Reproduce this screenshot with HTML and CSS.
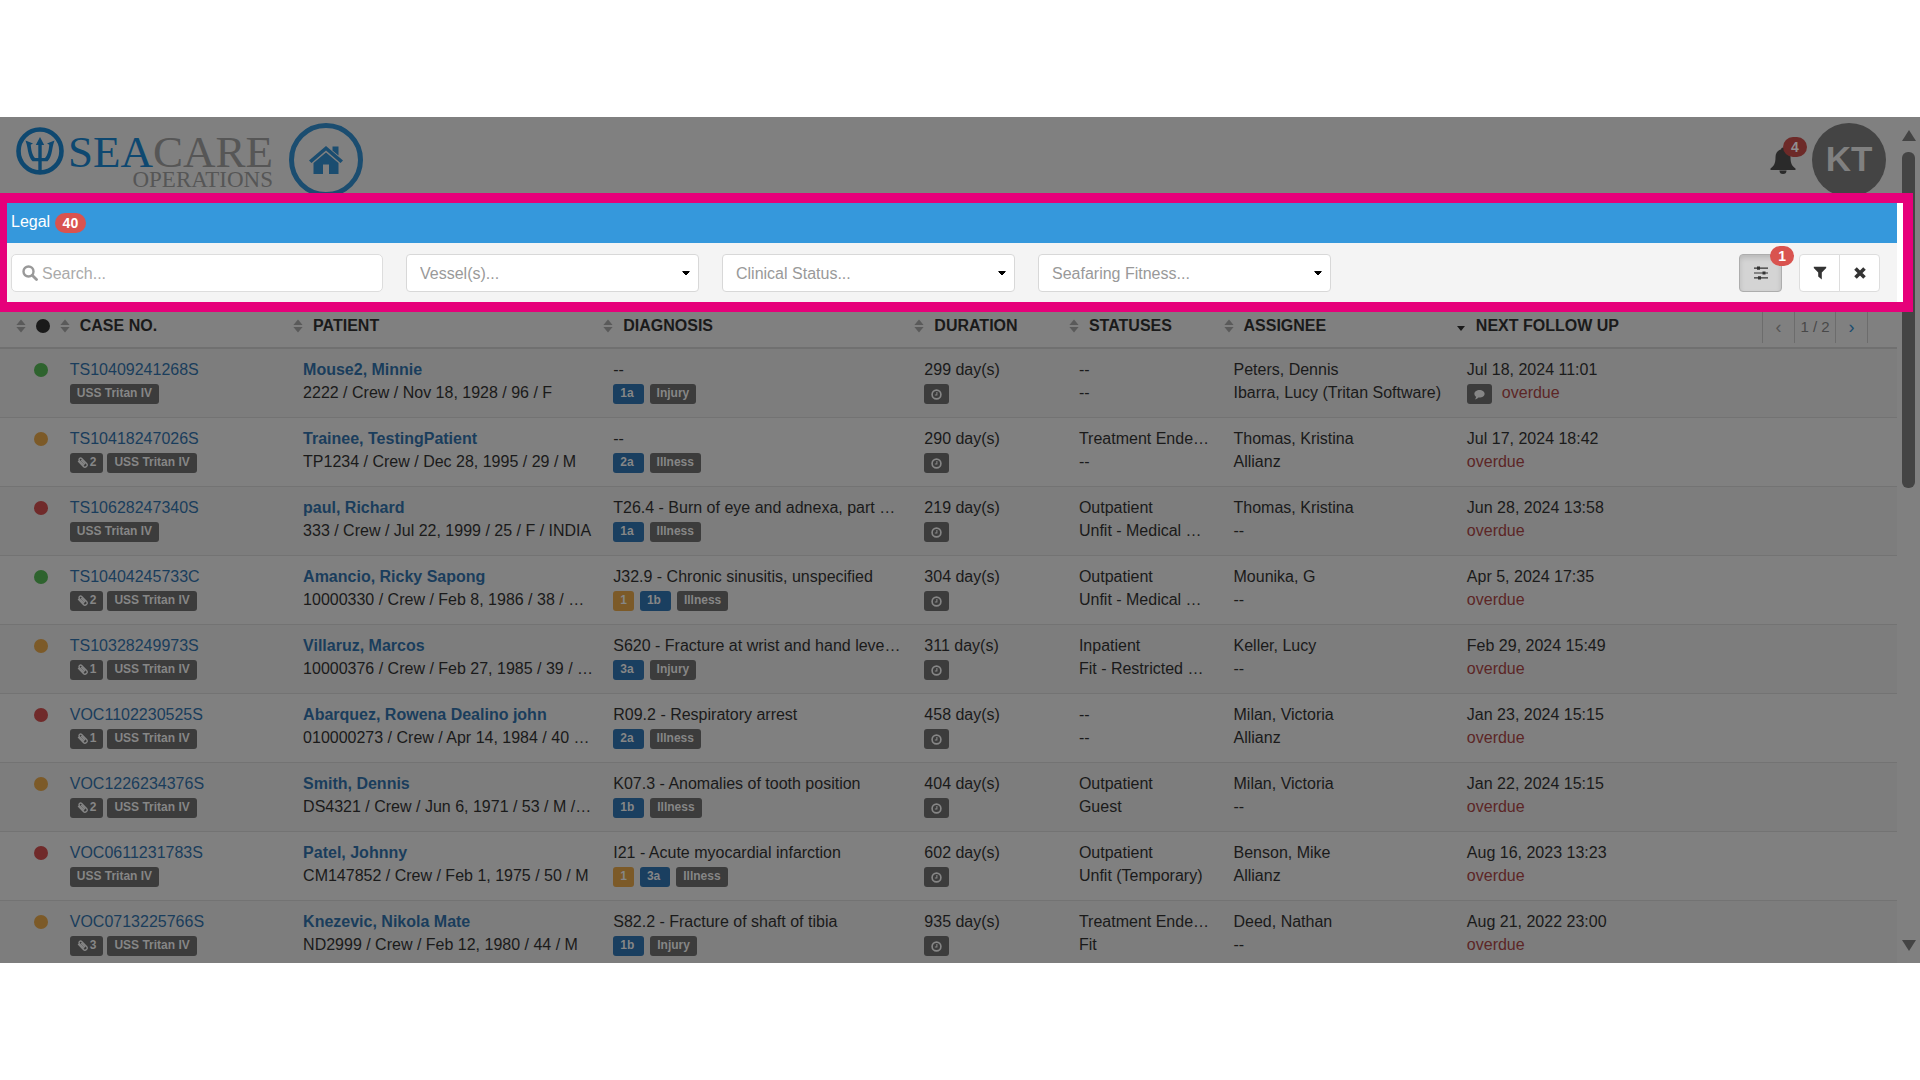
FILE: index.html
```
<!DOCTYPE html>
<html lang="en">
<head>
  <meta charset="UTF-8">
  <title>SeaCare Operations</title>
  <link rel="stylesheet" href="styles.css">
</head>
<body>

<!-- icons -->
<svg class="sprite" xmlns="http://www.w3.org/2000/svg">
  <symbol id="i-sort" viewBox="0 0 10 14"><path d="M5 0.5 9.6 6H0.4zM5 13.5 0.4 8h9.2z"/></symbol>
  <symbol id="i-clip" viewBox="0 0 10 10"><path d="M1 3.600 5.800 8.600a1.900 1.900 0 0 0 2.900-2.700L4.300 1.400a1.300 1.300 0 0 0-2 1.900L6.500 7.500M3.800 2.800 7.300 6.400" fill="none" stroke="currentColor" stroke-width="1.200"/></symbol>
  <symbol id="i-clock" viewBox="0 0 12 12"><circle cx="6" cy="6" r="4.8" fill="none" stroke="currentColor" stroke-width="1.8"/><path d="M6.4 3.2v3.4H4.2" fill="none" stroke="currentColor" stroke-width="1.2"/></symbol>
  <symbol id="i-comment" viewBox="0 0 12 12"><path d="M6 1C9 1 11.6 2.8 11.6 5.2S9 9.4 6 9.4L4.8 9.3C3.8 10.4 2.4 11.2 0.9 11.3 1.8 10.5 2.2 9.6 2.3 8.5 1.1 7.7 0.4 6.5 0.4 5.2 0.4 2.8 3 1 6 1z"/></symbol>
</svg>

<div class="app">
  <header class="topbar">
    <a class="logo" href="#">
      <svg class="trident" viewBox="0 0 48 48" aria-hidden="true">
        <circle cx="24" cy="24" r="21.5" fill="none" stroke="currentColor" stroke-width="4.6"/>
        <path d="M22.300 44V18h-2.500L24 10l4.200 8h-2.500v26z"/>
        <path d="M9.500 13.500l7.500 3-2.300 1.300c.6 6.500 1.800 10.500 4.300 13.200h10c2.500-2.700 3.700-6.700 4.300-13.200L31 16.500l7.500-3c-1.800 4.500-2 9-3.200 13.500-.7 3-2 5.200-3.800 7.200h-15c-1.800-2-3.100-4.200-3.800-7.200-1.200-4.500-1.400-9-3.200-13.500z"/>
      </svg>
      <span class="logo-text">
        <span class="logo-name"><b>SEA</b>CARE</span>
        <span class="logo-sub">OPERATIONS</span>
      </span>
    </a>
    <a class="home" href="#" aria-label="Home">
      <svg viewBox="0 0 36 30"><path d="M18 1 35 15.5 32.5 18 18 5.5 3.5 18 1 15.5zM24.5 1.500h6v9l-6-5zM18 7.500 30.500 18v11H21V19.500h-6V29H5.500V18z"/></svg>
    </a>
    <button class="bell" aria-label="Notifications">
      <svg viewBox="0 0 26 28"><path d="M13 1.500c1.200 0 1.800.8 1.800 1.800 4 1 5.700 4 5.700 8 0 6 1.500 8.700 5 11.200v1.500H0.500v-1.500C4 20 5.500 17.300 5.500 11.300c0-4 1.700-7 5.700-8 0-1 .6-1.800 1.800-1.800zM9.500 24.500h7a3.500 3.500 0 0 1-7 0z"/></svg>
      <span class="count">4</span>
    </button>
    <button class="avatar">KT</button>
  </header>

  <section class="focus">
    <h1 class="title">Legal <span class="count">40</span></h1>
    <form class="filters">
      <label class="search">
        <svg viewBox="0 0 16 16" aria-hidden="true"><circle cx="6.5" cy="6.5" r="5" fill="none" stroke="currentColor" stroke-width="2.4"/><path d="M10.2 10.2 14.5 14.5" stroke="currentColor" stroke-width="2.8" stroke-linecap="round"/></svg>
        <input type="text" placeholder="Search..." aria-label="Search">
      </label>
      <select aria-label="Vessels"><option>Vessel(s)...</option></select>
      <select aria-label="Clinical status"><option>Clinical Status...</option></select>
      <select aria-label="Seafaring fitness"><option>Seafaring Fitness...</option></select>
      <div class="tools">
        <button type="button" class="btn active" aria-label="Settings">
          <svg viewBox="0 0 14 14"><path d="M0 1.500h14v1.200H0zM0 6.400h14v1.200H0zM0 11.300h14v1.200H0zM3 .5h3v3.200H3zM8.500 5.400h3v3.200h-3zM4 10.300h3v3.200H4z"/></svg>
          <span class="count">1</span>
        </button>
        <div class="btn-group">
          <button type="button" class="btn" aria-label="Filter"><svg viewBox="0 0 14 14"><path d="M.8.800h12.400v1.200L8.800 6.500v7L5.200 10.500v-4L.8 2z"/></svg></button>
          <button type="button" class="btn" aria-label="Clear"><svg viewBox="0 0 14 14"><path d="M2.500 2.500 11.500 11.500M11.500 2.500 2.500 11.500" stroke="currentColor" stroke-width="3.6"/></svg></button>
        </div>
      </div>
    </form>
  </section>

  <table class="cases">
    <colgroup>
      <col class="c-dot"><col class="c-case"><col class="c-patient"><col class="c-diag"><col class="c-dur"><col class="c-stat"><col class="c-assign"><col>
    </colgroup>
    <thead>
      <tr>
        <th class="first"><svg class="sort"><use href="#i-sort"/></svg><i class="dot"></i></th>
        <th><svg class="sort"><use href="#i-sort"/></svg>CASE NO.</th>
        <th><svg class="sort"><use href="#i-sort"/></svg>PATIENT</th>
        <th><svg class="sort"><use href="#i-sort"/></svg>DIAGNOSIS</th>
        <th><svg class="sort"><use href="#i-sort"/></svg>DURATION</th>
        <th><svg class="sort"><use href="#i-sort"/></svg>STATUSES</th>
        <th><svg class="sort"><use href="#i-sort"/></svg>ASSIGNEE</th>
        <th>
          <div class="last">
            <span><i class="caret"></i>NEXT FOLLOW UP</span>
            <div class="pager"><button aria-label="Previous" disabled>&#8249;</button><span>1 / 2</span><button aria-label="Next">&#8250;</button></div>
          </div>
        </th>
      </tr>
    </thead>
    <tbody id="rows"></tbody>
  </table>

  <div class="scrollbar"><i class="up"></i><i class="thumb"></i><i class="down"></i></div>
</div>

<script src="script.js"></script>
</body>
</html>
```
FILE: styles.css
```
* {
  box-sizing: border-box;
}

body {
  margin: 0;
  padding: 117px 0;
  background: #fff;
  color: #1a1a1a;
  font: 16px/23px "Liberation Sans", Arial, sans-serif;
}

button, input, select {
  font: inherit;
  color: inherit;
  margin: 0;
}

a {
  text-decoration: none;
}

svg {
  fill: currentColor;
}

.sprite {
  display: none;
}

.app {
  position: relative;
  z-index: 0;
  height: calc(100vh - 234px);
  padding-right: 23px;
  background: #808080;
  overflow: hidden;
}

/* top bar */
.topbar {
  display: flex;
  height: 76px;
  padding: 6px 11px 0 16px;
}

.logo {
  display: flex;
  color: #0e4870;
  margin-right: 16px;
}

.trident {
  width: 48px;
  height: 48px;
  margin-top: 4px;
}

.logo-text {
  display: flex;
  flex-direction: column;
  align-items: flex-end;
  padding: 9px 0 0 4px;
  font-family: "Liberation Serif", "Times New Roman", serif;
  color: #565656;
}

.logo-name {
  font-size: 45px;
  line-height: 40px;
}

.logo-name b {
  color: #0e4870;
  font-weight: normal;
}

.logo-sub {
  font-size: 23px;
  line-height: 16px;
}

.home {
  display: flex;
  align-items: center;
  justify-content: center;
  width: 74px;
  height: 74px;
  border: 5px solid #1b4d70;
  border-radius: 50%;
  color: #1b4d70;
}

.home svg {
  width: 36px;
  height: 30px;
}

.bell {
  position: relative;
  align-self: flex-start;
  margin: 23px 16px 0 auto;
  padding: 0;
  border: 0;
  background: none;
  height: 28px;
  color: #2a2a2a;
}

.bell svg {
  width: 26px;
  height: 28px;
}

.count {
  display: inline-block;
  min-width: 23px;
  padding: 0 8px;
  border-radius: 10px;
  background: #d9534f;
  color: #fff;
  font-size: 14px;
  font-weight: bold;
  line-height: 20px;
  text-align: center;
}

.bell .count {
  position: absolute;
  top: -9px;
  left: 13px;
  background: #6d2a28;
  color: #909090;
}

.avatar {
  width: 74px;
  height: 74px;
  padding: 0 0 3px;
  border: 0;
  border-radius: 50%;
  background: #444;
  color: #808080;
  font-size: 35px;
  font-weight: bold;
}

/* highlighted area */
.focus {
  position: relative;
  margin-right: -16px;
  border: solid #e6007a;
  border-width: 10px 10px 10px 7px;
  background: #fff;
}

.title {
  margin: 0 6px 0 0;
  padding: 7px 4px 10px;
  background: #3598dc;
  color: #fff;
  font-size: 16px;
  font-weight: normal;
  line-height: 23px;
}

.title .count {
  vertical-align: -1px;
}

.filters {
  display: flex;
  gap: 23px;
  margin-right: 6px;
  padding: 11px 17px 10px 4px;
  background: #f4f4f4;
}

.search {
  display: flex;
  align-items: center;
  gap: 4px;
  width: 372px;
  height: 38px;
  padding: 0 10px;
  border: 1px solid #ddd;
  border-radius: 5px;
  background: #fff;
  color: #999;
}

.search svg {
  width: 16px;
  height: 16px;
}

.search input {
  flex: 1;
  min-width: 0;
  padding: 0;
  border: 0;
  outline: 0;
}

.search input::placeholder {
  color: #aaa;
}

select {
  appearance: none;
  width: 293px;
  height: 38px;
  padding: 0 13px;
  border: 1px solid #d8d8d8;
  border-radius: 4px;
  background: #fff;
  background-image: linear-gradient(to top right, transparent 50%, #000 52%), linear-gradient(to top left, transparent 50%, #000 52%);
  background-size: 4px 5px;
  background-position: right 12px center, right 8px center;
  background-repeat: no-repeat;
  color: #999 !important;
}

.tools {
  display: flex;
  gap: 17px;
  margin-left: auto;
}

.btn {
  position: relative;
  display: flex;
  align-items: center;
  justify-content: center;
  width: 41px;
  height: 38px;
  padding: 0;
  border: 1px solid #ddd;
  border-radius: 4px;
  background: #fff;
  color: #333;
}

.btn svg {
  width: 14px;
  height: 14px;
}

.btn.active {
  width: 43px;
  border-color: #adadad;
  background: #d4d4d4;
  box-shadow: inset 0 3px 5px rgba(0, 0, 0, 0.125);
}

.btn .count {
  position: absolute;
  top: -9px;
  right: -13px;
}

.btn-group {
  display: flex;
}

.btn-group .btn:first-child {
  border-radius: 4px 0 0 4px;
}

.btn-group .btn:last-child {
  margin-left: -1px;
  border-radius: 0 4px 4px 0;
}

/* table */
.cases {
  width: 100%;
  table-layout: fixed;
  border-collapse: separate;
  border-spacing: 0;
}

.c-dot { width: 3.15%; }
.c-case { width: 12.3%; }
.c-patient { width: 16.35%; }
.c-diag { width: 16.4%; }
.c-dur, .c-stat { width: 8.15%; }
.c-assign { width: 12.3%; }

.cases th {
  height: 37px;
  padding: 0;
  border-bottom: 2px solid #707070;
  text-align: left;
  vertical-align: top;
  line-height: 28px;
  white-space: nowrap;
}

.cases .first {
  padding-left: 16px;
}

.sort {
  width: 10px;
  height: 14px;
  margin-right: 10px;
  vertical-align: -2px;
  color: #5a5a5a;
}

.dot {
  display: inline-block;
  width: 14px;
  height: 14px;
  border-radius: 50%;
  background: #1a1a1a;
  vertical-align: -2px;
}

.green { background: #2e632e; }
.orange { background: #7c5a28; }
.red { background: #702a2a; }

.last {
  display: flex;
  justify-content: space-between;
  padding-right: 29px;
}

.caret {
  display: inline-block;
  margin-right: 11px;
  border: solid transparent;
  border-width: 5px 4px 0;
  border-top-color: #1a1a1a;
}

.pager {
  display: flex;
  height: 31px;
  border-left: 1px solid #6c6c6c;
  font-weight: normal;
  font-size: 15px;
  line-height: 30px;
  color: #484848;
}

.pager > * {
  width: 32px;
  padding: 0;
  border: 0;
  border-right: 1px solid #6c6c6c;
  background: none;
  text-align: center;
}

.pager span {
  width: 41px;
}

.pager button {
  padding-bottom: 3px;
  font-size: 18px;
  color: #1b4d70;
}

.pager button:disabled {
  color: #555;
}

.cases td {
  height: 69px;
  padding: 9px 10px 13px;
  border-bottom: 1px solid #737373;
  vertical-align: top;
  white-space: nowrap;
}

.cases td:first-child {
  padding-left: 34px;
}

.cases tbody tr:nth-child(odd) {
  background: #7d7d7d;
}

.cases a {
  color: #1a3d5c;
}

.cases td a.name {
  font-weight: bold;
}

.line {
  display: flex;
  align-items: center;
  height: 23px;
}

.labels {
  gap: 6px;
}

.c-files {
  gap: 4px;
}

.label {
  display: flex;
  align-items: center;
  gap: 2px;
  height: 20px;
  margin-top: 3px;
  padding: 0 7px 2px;
  border-radius: 3px;
  background: #3c3c3c;
  color: #868686;
  font-size: 12px;
  font-weight: bold;
  line-height: 18px;
}

.label svg {
  width: 11px;
  height: 11px;
}

.label.icon {
  padding: 0 7px;
}

.label.blue {
  padding-right: 10px;
  background: #1a3f60;
}

.label.orange {
  background: #7c5a28;
}

.overdue {
  color: #5c2626;
}

.icon + .overdue {
  margin-left: 4px;
}

/* scrollbar */
.scrollbar {
  position: absolute;
  top: 0;
  right: 0;
  bottom: 0;
  z-index: -1;
  display: flex;
  flex-direction: column;
  align-items: center;
  width: 23px;
  padding: 13px 0 12px;
}

.up, .down {
  border: solid transparent;
  border-width: 0 7px 11px;
  border-bottom-color: #444;
}

.down {
  border-width: 11px 7px 0;
  border-top-color: #444;
  margin-top: auto;
}

.thumb {
  width: 13px;
  height: 336px;
  margin-top: 11px;
  border-radius: 6px;
  background: #444;
}
```
FILE: script.js
```
const cases = [
  ["green", "TS10409241268S", 0, "Mouse2, Minnie", "2222 / Crew / Nov 18, 1928 / 96 / F", "--", "", "1a", "Injury", 299, "--", "--", "Peters, Dennis", "Ibarra, Lucy (Tritan Software)", "Jul 18, 2024 11:01", true],
  ["orange", "TS10418247026S", 2, "Trainee, TestingPatient", "TP1234 / Crew / Dec 28, 1995 / 29 / M", "--", "", "2a", "Illness", 290, "Treatment Ende…", "--", "Thomas, Kristina", "Allianz", "Jul 17, 2024 18:42"],
  ["red", "TS10628247340S", 0, "paul, Richard", "333 / Crew / Jul 22, 1999 / 25 / F / INDIA", "T26.4 - Burn of eye and adnexa, part …", "", "1a", "Illness", 219, "Outpatient", "Unfit - Medical …", "Thomas, Kristina", "--", "Jun 28, 2024 13:58"],
  ["green", "TS10404245733C", 2, "Amancio, Ricky Sapong", "10000330 / Crew / Feb 8, 1986 / 38 / …", "J32.9 - Chronic sinusitis, unspecified", "1", "1b", "Illness", 304, "Outpatient", "Unfit - Medical …", "Mounika, G", "--", "Apr 5, 2024 17:35"],
  ["orange", "TS10328249973S", 1, "Villaruz, Marcos", "10000376 / Crew / Feb 27, 1985 / 39 / …", "S620 - Fracture at wrist and hand leve…", "", "3a", "Injury", 311, "Inpatient", "Fit - Restricted …", "Keller, Lucy", "--", "Feb 29, 2024 15:49"],
  ["red", "VOC1102230525S", 1, "Abarquez, Rowena Dealino john", "010000273 / Crew / Apr 14, 1984 / 40 …", "R09.2 - Respiratory arrest", "", "2a", "Illness", 458, "--", "--", "Milan, Victoria", "Allianz", "Jan 23, 2024 15:15"],
  ["orange", "VOC1226234376S", 2, "Smith, Dennis", "DS4321 / Crew / Jun 6, 1971 / 53 / M /…", "K07.3 - Anomalies of tooth position", "", "1b", "Illness", 404, "Outpatient", "Guest", "Milan, Victoria", "--", "Jan 22, 2024 15:15"],
  ["red", "VOC0611231783S", 0, "Patel, Johnny", "CM147852 / Crew / Feb 1, 1975 / 50 / M", "I21 - Acute myocardial infarction", "1", "3a", "Illness", 602, "Outpatient", "Unfit (Temporary)", "Benson, Mike", "Allianz", "Aug 16, 2023 13:23"],
  ["orange", "VOC0713225766S", 3, "Knezevic, Nikola Mate", "ND2999 / Crew / Feb 12, 1980 / 44 / M", "S82.2 - Fracture of shaft of tibia", "", "1b", "Injury", 935, "Treatment Ende…", "Fit", "Deed, Nathan", "--", "Aug 21, 2022 23:00"]
];

const icon = id => `<svg><use href="#i-${id}"/></svg>`;
const two = (a, b) => `<td><div class="line">${a}</div><div class="line">${b}</div></td>`;

document.getElementById("rows").innerHTML = cases.map(c => `<tr>
  <td><div class="line"><i class="dot ${c[0]}"></i></div></td>
  <td><div class="line"><a href="#">${c[1]}</a></div><div class="line c-files">${c[2] ? `<span class="label">${icon("clip")}${c[2]}</span>` : ""}<span class="label">USS Tritan IV</span></div></td>
  ${two(`<a class="name" href="#">${c[3]}</a>`, c[4])}
  <td><div class="line">${c[5]}</div><div class="line labels">${c[6] ? `<span class="label orange">${c[6]}</span>` : ""}<span class="label blue">${c[7]}</span><span class="label">${c[8]}</span></div></td>
  <td><div class="line">${c[9]} day(s)</div><div class="line"><span class="label icon">${icon("clock")}</span></div></td>
  ${two(c[10], c[11])}
  ${two(c[12], c[13])}
  <td><div class="line">${c[14]}</div><div class="line labels">${c[15] ? `<span class="label icon">${icon("comment")}</span>` : ""}<span class="overdue">overdue</span></div></td>
</tr>`).join("");
```
